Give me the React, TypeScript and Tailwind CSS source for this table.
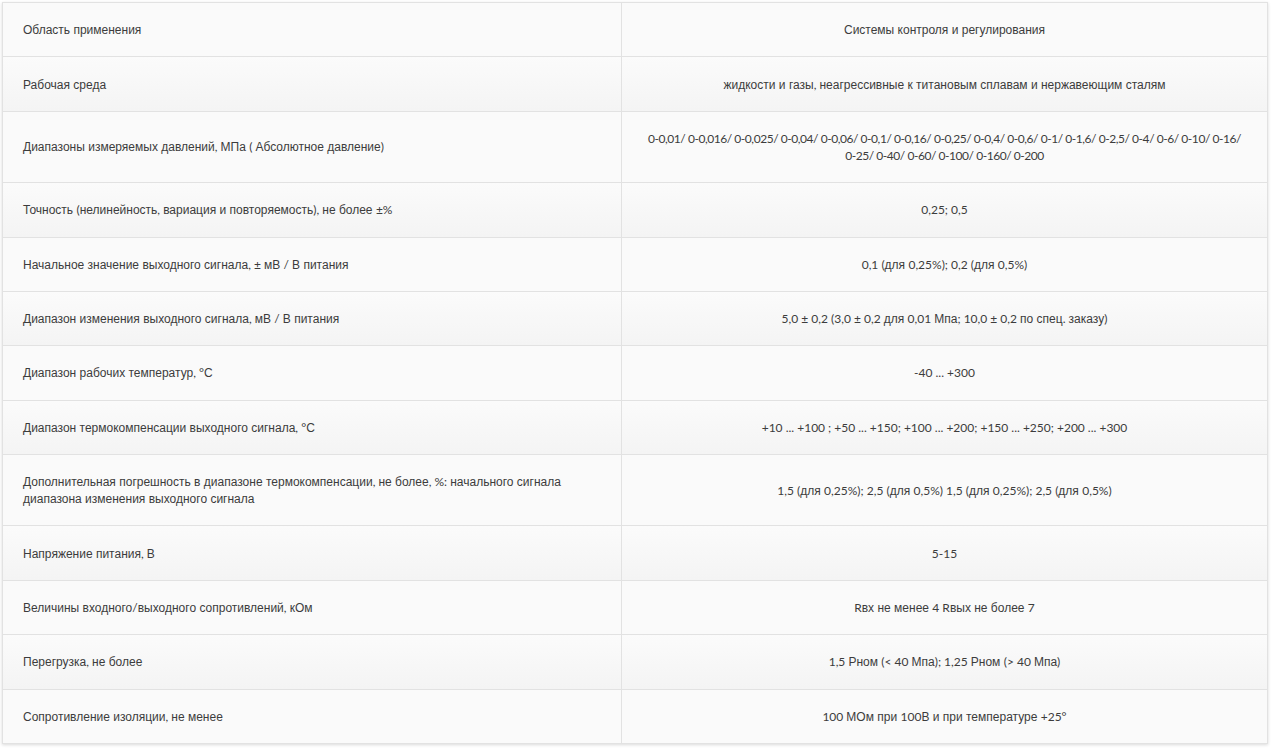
import { Fragment, type ReactNode } from 'react';

const rows: [string, ReactNode][] = [
  ['Область применения', 'Системы контроля и регулирования'],
  ['Рабочая среда', 'жидкости и газы, неагрессивные к титановым сплавам и нержавеющим сталям'],
  [
    'Диапазоны измеряемых давлений, МПа ( Абсолютное давление)',
    <span className="tracking-[-0.45px]">
      <span className="whitespace-nowrap">
        0-0,01/ 0-0,016/ 0-0,025/ 0-0,04/ 0-0,06/ 0-0,1/ 0-0,16/ 0-0,25/ 0-0,4/ 0-0,6/ 0-1/ 0-1,6/ 0-2,5/ 0-4/ 0-6/ 0-10/ 0-16/
      </span>
      <br />
      0-25/ 0-40/ 0-60/ 0-100/ 0-160/ 0-200
    </span>,
  ],
  ['Точность (нелинейность, вариация и повторяемость), не более ±%', '0,25; 0,5'],
  ['Начальное значение выходного сигнала, ± мВ / В питания', '0,1 (для 0,25%); 0,2 (для 0,5%)'],
  ['Диапазон изменения выходного сигнала, мВ / В питания', '5,0 ± 0,2 (3,0 ± 0,2 для 0,01 Мпа; 10,0 ± 0,2 по спец. заказу)'],
  ['Диапазон рабочих температур, °С', '-40 ... +300'],
  ['Диапазон термокомпенсации выходного сигнала, °С', '+10 ... +100 ; +50 ... +150;  +100 ... +200;  +150 ... +250;  +200 ... +300'],
  [
    'Дополнительная погрешность в диапазоне термокомпенсации, не более, %: начального сигнала диапазона изменения выходного сигнала',
    '1,5 (для 0,25%); 2,5 (для 0,5%) 1,5 (для 0,25%); 2,5 (для 0,5%)',
  ],
  ['Напряжение питания, В', '5-15'],
  ['Величины входного/выходного сопротивлений, кОм', 'Rвх не менее 4 Rвых не более 7'],
  ['Перегрузка, не более', '1,5 Рном (< 40 Мпа); 1,25 Рном (> 40 Мпа)'],
  ['Сопротивление изоляции, не менее', '100 МОм при 100В и при температуре +25°'],
];

// Cyrillic words render in an Arial-like face, everything else in Lato
function Mixed({ text }: { text: ReactNode }) {
  if (typeof text !== 'string') return <>{text}</>;
  const parts = text.split(/([\u0400-\u04FF]+ ?)/);
  return (
    <>
      {parts.map((p, i) =>
        /[\u0400-\u04FF]/.test(p) ? (
          <span key={i} className="font-['Liberation_Sans',Arial,sans-serif] leading-[12px]">
            {p}
          </span>
        ) : (
          <Fragment key={i}>{p}</Fragment>
        )
      )}
    </>
  );
}

export default function App() {
  return (
    <div className="bg-white min-h-screen p-[2px] pr-[5px]">
      <table className="w-full border-collapse border border-[#d2d2d2] shadow-[0_1px_3px_rgba(0,0,0,0.15)] text-[12px] leading-[17px] text-[#3c3c3c] font-['Lato',sans-serif]">
        <tbody>
          {rows.map(([label, value], i) => (
            <tr
              key={i}
              className={
                i % 2 === 0
                  ? 'bg-[#fafafa]'
                  : 'bg-gradient-to-b from-[#fbfbfb] to-[#f4f4f4]'
              }
            >
              <td className="w-[619px] border border-[#e2e2e2] pl-[20px] pr-[20px] py-[18.2px] align-middle">
                <Mixed text={label} />
              </td>
              <td className="border border-[#e2e2e2] px-[16px] py-[18.2px] text-center align-middle">
                <Mixed text={value} />
              </td>
            </tr>
          ))}
        </tbody>
      </table>
    </div>
  );
}
